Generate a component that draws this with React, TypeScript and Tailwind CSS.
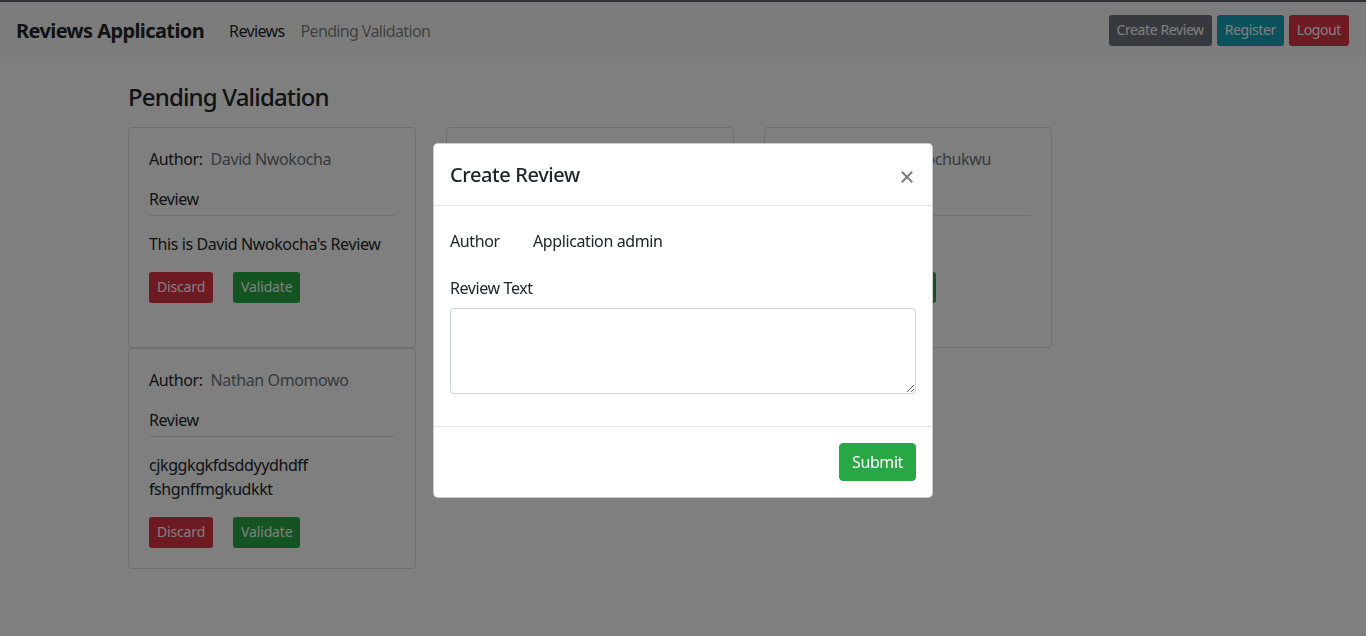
import React from "react";

type Review = { author: string; text: string[] };

const pending: Review[] = [
  { author: "David Nwokocha", text: ["This is David Nwokocha's Review"] },
  { author: "Samuel Adeyemi", text: ["This review is waiting for", "validation by the admin"] },
  { author: "Ebuka Onuochukwu", text: ["Great service"] },
  { author: "Nathan Omomowo", text: ["cjkggkgkfdsddyydhdff", "fshgnffmgkudkkt"] },
];

function ReviewCard({ review }: { review: Review }) {
  return (
    <div className="w-[288px] rounded-[4px] border border-black/[0.125] bg-white px-5 pt-[19px] pb-5">
      <div className="mb-4 leading-6">
        Author:<span className="ml-2 text-[#6c757d]">{review.author}</span>
      </div>
      <div className="border-b border-[#dee2e6] pb-[4px] leading-6">Review</div>
      <div className="mt-4 leading-6">
        {review.text.map((line) => (
          <div key={line}>{line}</div>
        ))}
      </div>
      <div className="mt-4 flex gap-5 tracking-[-0.01em]">
        <button className="h-[31px] rounded-[3px] bg-[#dc3545] px-2 text-sm text-white">Discard</button>
        <button className="h-[31px] rounded-[3px] bg-[#28a745] px-2 text-sm text-white">Validate</button>
      </div>
    </div>
  );
}

export default function App() {
  return (
    <div className="relative min-h-screen bg-white font-['Noto_Sans',sans-serif] text-base tracking-[-0.025em] text-[#212529]">
      <nav className="flex items-center border-t-2 border-[#5c6066] bg-[#f8f9fa] px-4 py-2">
        <span className="mr-[17px] pt-[6px] pb-[4px] text-xl font-bold leading-[30px] tracking-[-0.03em]">
          Reviews Application
        </span>
        <a className="px-2 pt-[9px] pb-[7px] leading-6 tracking-[-0.04em] text-black/90">Reviews</a>
        <a className="px-2 pt-[9px] pb-[7px] leading-6 tracking-[-0.04em] text-black/50">Pending Validation</a>
        <div className="ml-auto mr-[1px] flex gap-[5px]">
          <button className="h-[31px] rounded-[3px] bg-[#6c757d] px-2 text-sm text-white">Create Review</button>
          <button className="h-[31px] rounded-[3px] bg-[#17a2b8] px-2 text-sm text-white">Register</button>
          <button className="h-[31px] rounded-[3px] bg-[#dc3545] px-2 text-sm text-white">Logout</button>
        </div>
      </nav>

      <main className="mx-auto w-[1140px] px-[15px] pt-[25px]">
        <h4 className="mb-[15px] text-2xl font-medium leading-[1.2] tracking-[-0.035em]">Pending Validation</h4>
        <div className="flex flex-wrap gap-x-[30px]">
          {pending.map((r) => (
            <ReviewCard key={r.author} review={r} />
          ))}
        </div>
      </main>

      <div className="fixed inset-0 bg-black/50" />

      <div className="fixed inset-0 flex items-start justify-center pt-[143px]">
        <div className="w-[500px] rounded-[5px] border border-black/20 bg-white">
          <div className="flex items-start justify-between border-b border-[#dee2e6] px-4 pt-4 pb-[15px]">
            <h5 className="text-xl font-medium leading-[30px]">Create Review</h5>
            <button className="mr-[1px] mt-[9px] p-[2px]">
              <svg width="12" height="12" viewBox="0 0 12 12" className="block">
                <path d="M1.5 1.5 L10.5 10.5 M10.5 1.5 L1.5 10.5" stroke="#7d7d7d" strokeWidth="2" strokeLinecap="square" />
              </svg>
            </button>
          </div>
          <div className="p-4">
            <div className="mb-4 flex leading-6">
              <div className="w-[83px] py-[7px]">Author</div>
              <div className="py-[7px]">Application admin</div>
            </div>
            <div className="mb-4">
              <label className="mb-2 block leading-6">Review Text</label>
              <textarea
                rows={3}
                className="block h-[86px] w-full resize-y rounded-[4px] border border-[#ced4da] px-3 py-1.5 leading-6 outline-none"
              />
            </div>
          </div>
          <div className="flex justify-end border-t border-[#dee2e6] p-3">
            <button className="m-1 rounded-[4px] border border-[#28a745] bg-[#28a745] px-3 py-1.5 leading-6 text-white">
              Submit
            </button>
          </div>
        </div>
      </div>
    </div>
  );
}
